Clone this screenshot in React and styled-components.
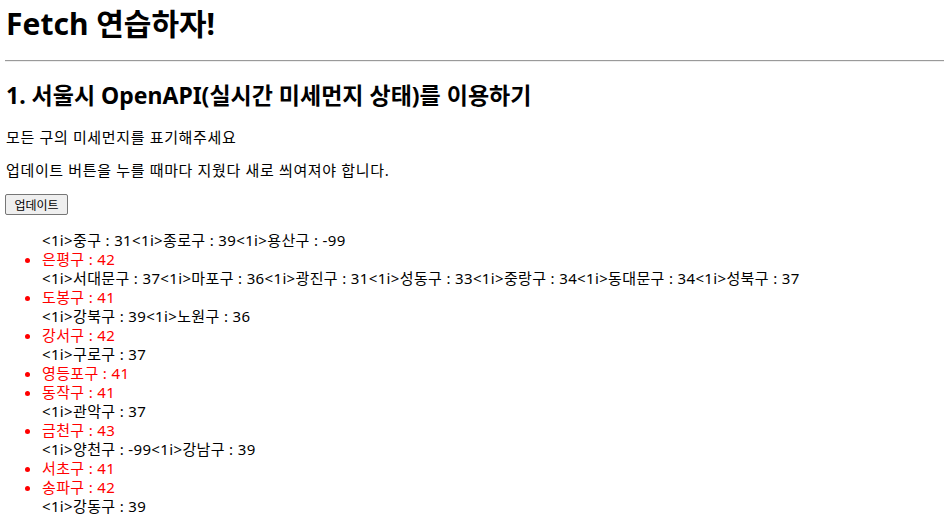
import React from 'react'
import styled, { createGlobalStyle } from 'styled-components'

const GlobalStyle = createGlobalStyle`
  html, body {
    margin: 0;
    padding: 0;
    background: #fff;
  }
  body {
    font-family: "Noto Sans", "Noto Sans CJK KR", sans-serif;
    color: #000;
  }
`

const Page = styled.div`
  padding: 0 0 0 5px;
`

const Title = styled.h1`
  font-size: 30px;
  font-weight: 700;
  line-height: 36px;
  margin: 6px 0 0 1px;
`

const Rule = styled.hr`
  margin: 18px 0 0;
  border: 0;
  border-top: 1px solid #9a9a9a;
  border-bottom: 1px solid #eeeeee;
  height: 0;
`

const Subtitle = styled.h2`
  font-size: 23px;
  font-weight: 700;
  line-height: 28px;
  margin: 19px 0 0 1px;
`

const Text = styled.p`
  font-size: 15px;
  letter-spacing: 0.65px;
  line-height: 19px;
  margin: ${p => p.$top || 14}px 0 0 1px;
`

const UpdateButton = styled.button`
  display: block;
  margin-top: 14px;
  width: 63px;
  height: 21px;
  padding: 0;
  font-family: "Noto Sans", "Noto Sans CJK KR", sans-serif;
  font-size: 12px;
  color: #000;
  background: #efefef;
  border: 1px solid #767676;
  border-radius: 2px;
`

const DustList = styled.ul`
  margin: 16px 0 0;
  padding-left: 37px;
  font-size: 15px;
  letter-spacing: 0.35px;
  line-height: 19px;
`

const Plain = styled.div`
  color: #000;
`

const Bad = styled.li`
  color: #ff0000;
  &::marker {
    color: #ff0000;
  }
`

const rows = [
  { t: 'p', v: '<1i>중구 : 31<1i>종로구 : 39<1i>용산구 : -99' },
  { t: 'li', v: '은평구 : 42' },
  { t: 'p', v: '<1i>서대문구 : 37<1i>마포구 : 36<1i>광진구 : 31<1i>성동구 : 33<1i>중랑구 : 34<1i>동대문구 : 34<1i>성북구 : 37' },
  { t: 'li', v: '도봉구 : 41' },
  { t: 'p', v: '<1i>강북구 : 39<1i>노원구 : 36' },
  { t: 'li', v: '강서구 : 42' },
  { t: 'p', v: '<1i>구로구 : 37' },
  { t: 'li', v: '영등포구 : 41' },
  { t: 'li', v: '동작구 : 41' },
  { t: 'p', v: '<1i>관악구 : 37' },
  { t: 'li', v: '금천구 : 43' },
  { t: 'p', v: '<1i>양천구 : -99<1i>강남구 : 39' },
  { t: 'li', v: '서초구 : 41' },
  { t: 'li', v: '송파구 : 42' },
  { t: 'p', v: '<1i>강동구 : 39' },
]

export default function App() {
  return (
    <Page>
      <GlobalStyle />
      <Title>Fetch 연습하자!</Title>
      <Rule />
      <Subtitle>1. 서울시 OpenAPI(실시간 미세먼지 상태)를 이용하기</Subtitle>
      <Text $top={19}>모든 구의 미세먼지를 표기해주세요</Text>
      <Text>업데이트 버튼을 누를 때마다 지웠다 새로 씌여져야 합니다.</Text>
      <UpdateButton>업데이트</UpdateButton>
      <DustList>
        {rows.map((r, i) =>
          r.t === 'li' ? <Bad key={i}>{r.v}</Bad> : <Plain key={i}>{r.v}</Plain>
        )}
      </DustList>
    </Page>
  )
}
